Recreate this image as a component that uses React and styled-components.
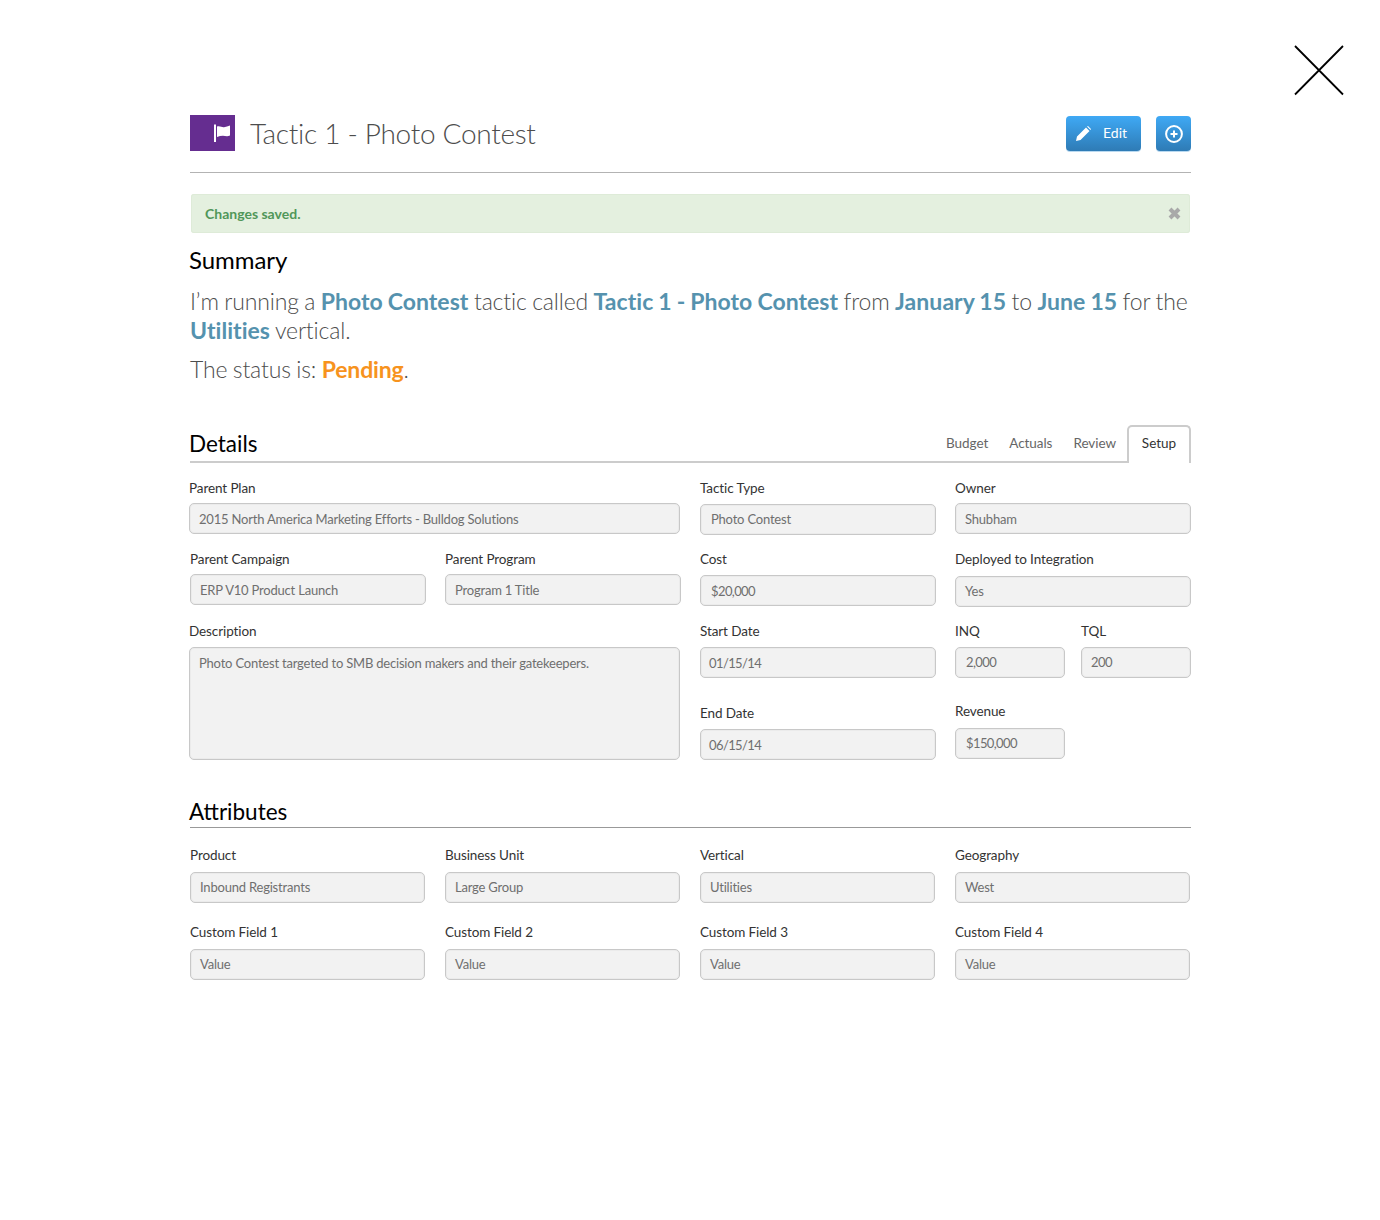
import React from "react";
import styled, { createGlobalStyle } from "styled-components";

const GlobalStyle = createGlobalStyle`
  html, body {
    margin: 0;
    padding: 0;
    background: #fff;
  }
  body {
    font-family: "Lato", "Liberation Sans", sans-serif;
    color: #4d4d4d;
  }
`;

const TABS = ["Budget", "Actuals", "Review"];

const ATTRIBUTES = [
  ["Product", "Inbound Registrants"],
  ["Business Unit", "Large Group"],
  ["Vertical", "Utilities"],
  ["Geography", "West"],
  ["Custom Field 1", "Value"],
  ["Custom Field 2", "Value"],
  ["Custom Field 3", "Value"],
  ["Custom Field 4", "Value"],
];

const Field = ({ label, value, gap, shift, pad, numeric, lift }) => (
  <FieldBox $shift={shift}>
    <Label $gap={gap}>{label}</Label>
    <Input $pad={pad} $numeric={numeric} $lift={lift}>{value}</Input>
  </FieldBox>
);

export default function App() {
  return (
    <Page>
      <GlobalStyle />
      <CloseButton aria-label="Close">
        <svg width="50" height="51" viewBox="0 0 50 51">
          <path d="M1 1 L49 49.5 M49 1 L1 49.5" stroke="#000" strokeWidth="1.8" fill="none" />
        </svg>
      </CloseButton>

      <Header>
        <TitleGroup>
          <IconTile>
            <svg width="17" height="18" viewBox="0 0 17 18">
              <rect x="0" y="0.5" width="2" height="17.5" fill="#fff" />
              <path d="M3 2.5 C6 1.5 8 3.6 10 3.2 C12 2.8 14 2 16 1.5 L16 11.5 C13 13 11 11.7 9 11.7 C7 11.7 5 12.2 3 13 Z" fill="#fff" />
            </svg>
          </IconTile>
          <Title>Tactic 1 - Photo Contest</Title>
        </TitleGroup>
        <Actions>
          <EditButton>
            <svg width="15" height="15" viewBox="0 0 15 15">
              <path d="M0 15 L1 10.5 L10 1.5 L13.5 5 L4.5 14 Z M11 0.5 L12 0 L15 3 L14.5 4 Z" fill="#fff" />
            </svg>
            <span>Edit</span>
          </EditButton>
          <IconButton aria-label="Add">
            <svg width="18" height="18" viewBox="0 0 18 18">
              <circle cx="9" cy="9" r="7.9" stroke="#fff" strokeWidth="2" fill="none" />
              <path d="M9 5.5 V12.5 M5.5 9 H12.5" stroke="#fff" strokeWidth="2" />
            </svg>
          </IconButton>
        </Actions>
      </Header>

      <Alert>
        Changes saved.
        <svg width="13" height="13" viewBox="0 0 13 13">
          <path d="M2 2 L11 11 M11 2 L2 11" stroke="#a9a9a9" strokeWidth="4" />
        </svg>
      </Alert>

      <SummaryHeading>Summary</SummaryHeading>
      <Sentence>
        I’m running a <Em>Photo Contest</Em> tactic called <Em>Tactic 1 - Photo Contest</Em> from{" "}
        <Em>January 15</Em> to <Em>June 15</Em> for the <Em>Utilities</Em> vertical.
      </Sentence>
      <Status>
        The status is: <Pending>Pending</Pending>.
      </Status>

      <SectionBar>
        <SectionHeading $bottom={2}>Details</SectionHeading>
        <Tabs>
          {TABS.map((t) => (
            <Tab key={t}>{t}</Tab>
          ))}
          <ActiveTab>Setup</ActiveTab>
        </Tabs>
      </SectionBar>

      <DetailsGrid>
        <LeftStack>
          <WideBlock>
            <Field label="Parent Plan" value="2015 North America Marketing Efforts - Bulldog Solutions" />
          </WideBlock>
          <TwoUp>
            <Field label="Parent Campaign" value="ERP V10 Product Launch" />
            <Field label="Parent Program" value="Program 1 Title" />
          </TwoUp>
          <WideBlock $shift={1}>
            <Label $gap={6}>Description</Label>
            <TextArea>Photo Contest targeted to SMB decision makers and their gatekeepers.</TextArea>
          </WideBlock>
        </LeftStack>
        <Column>
          <Field label="Tactic Type" value="Photo Contest" gap={6} pad={10} lift />
          <Field label="Cost" value="$20,000" gap={6} pad={10} numeric />
          <Field label="Start Date" value="01/15/14" gap={6} shift={1} pad={8} numeric />
          <Field label="End Date" value="06/15/14" gap={6} shift={11} pad={8} numeric />
        </Column>
        <Column>
          <Field label="Owner" value="Shubham" />
          <Field label="Deployed to Integration" value="Yes" gap={7} shift={1} lift />
          <SmallRow>
            <Field label="INQ" value="2,000" gap={6} pad={10} numeric lift />
            <Field label="TQL" value="200" gap={6} numeric lift />
          </SmallRow>
          <NarrowField>
            <Field label="Revenue" value="$150,000" gap={7} shift={9} pad={10} numeric lift />
          </NarrowField>
        </Column>
      </DetailsGrid>

      <AttributesBar>
        <SectionHeading>Attributes</SectionHeading>
      </AttributesBar>
      <AttributesGrid>
        {ATTRIBUTES.map(([label, value]) => (
          <Field key={label} label={label} value={value} gap={7} lift />
        ))}
      </AttributesGrid>
    </Page>
  );
}

const Page = styled.div`
  position: relative;
  width: 1001px;
  height: 1220px;
  box-sizing: border-box;
  margin-left: 190px;
  padding-top: 115px;
`;

const CloseButton = styled.div`
  position: absolute;
  top: 45px;
  right: -153px;
  line-height: 0;
`;

const Header = styled.header`
  display: flex;
  justify-content: space-between;
  align-items: flex-start;
  height: 57px;
  border-bottom: 1px solid #b3b3b3;
`;

const TitleGroup = styled.div`
  display: flex;
  align-items: flex-start;
  gap: 15px;
`;

const IconTile = styled.div`
  width: 45px;
  height: 36px;
  padding-left: 24px;
  box-sizing: border-box;
  display: flex;
  align-items: center;
  background: #652d90;
`;

const Title = styled.h1`
  margin: 0;
  font-size: 28px;
  font-weight: 300;
  line-height: 36px;
  letter-spacing: -0.3px;
  color: #4d4d4d;
`;

const Actions = styled.div`
  display: flex;
  gap: 15px;
  padding-top: 1px;
`;

const BlueButton = styled.div`
  height: 35px;
  box-sizing: border-box;
  display: flex;
  align-items: center;
  border-radius: 4px;
  color: #fff;
  background: linear-gradient(#3fa9f5, #2e7bb5);
  box-shadow: 0 1px 0 #b9d9f0;
`;

const EditButton = styled(BlueButton)`
  width: 75px;
  padding-left: 10px;
  gap: 12px;
  font-size: 14px;

  span {
    margin-bottom: 3px;
  }
`;

const IconButton = styled(BlueButton)`
  width: 35px;
  justify-content: center;
`;

const Alert = styled.div`
  display: flex;
  justify-content: space-between;
  align-items: center;
  margin: 21px 0 0 1px;
  height: 39px;
  width: 999px;
  box-sizing: border-box;
  padding: 0 9px 0 14px;
  background: #e4f0df;
  border-radius: 3px;
  box-shadow: inset 0 0 0 1px #deebd8;
  color: #51975a;
  font-size: 14px;
  font-weight: 700;
`;

const Heading = styled.h2`
  margin: 0;
  font-size: 22.5px;
  font-weight: 400;
  line-height: 30px;
  color: #000;
`;

const SummaryHeading = styled(Heading)`
  margin: 12px 0 0 -1px;
  font-size: 24px;
  letter-spacing: -0.05px;
`;

const SectionHeading = styled(Heading)`
  margin: 0 0 ${(p) => p.$bottom || 0}px -1px;
`;

const Sentence = styled.p`
  margin: 12px 0 0;
  font-size: 23px;
  font-weight: 300;
  line-height: 29px;
  letter-spacing: -0.15px;
  word-spacing: -0.65px;
  color: #4d4d4d;
`;

const Status = styled(Sentence)`
  margin-top: 10px;
`;

const Em = styled.strong`
  font-weight: 700;
  letter-spacing: 0.05px;
  color: #5592ae;
`;

const Pending = styled.strong`
  font-weight: 700;
  color: #f7931e;
`;

const SectionBar = styled.div`
  display: flex;
  justify-content: space-between;
  align-items: flex-end;
  margin-top: 40px;
  height: 37px;
  border-bottom: 2px solid #cccccc;
`;

const Tabs = styled.div`
  display: flex;
  align-items: flex-end;
  gap: 21px;
  margin-bottom: -2px;
`;

const Tab = styled.div`
  height: 36px;
  box-sizing: border-box;
  padding-bottom: 4px;
  display: flex;
  align-items: center;
  font-size: 13.5px;
  letter-spacing: -0.05px;
  color: #666666;
`;

const ActiveTab = styled.div`
  width: 64px;
  height: 38px;
  margin-left: -10px;
  padding-bottom: 4px;
  box-sizing: border-box;
  display: flex;
  align-items: center;
  justify-content: center;
  border: 2px solid #cccccc;
  border-bottom: 0;
  border-radius: 5px 5px 0 0;
  font-size: 13.5px;
  color: #333333;
  background: #fff;
`;

const DetailsGrid = styled.div`
  display: grid;
  grid-template-columns: 491px 236px 236px;
  column-gap: 19px;
  margin-top: 15px;
`;

const LeftStack = styled.div`
  display: flex;
  flex-direction: column;
  gap: 15px;
`;

const WideBlock = styled.div`
  margin: ${(p) => p.$shift || 0}px 0 0 -1px;
  width: 491px;
`;

const TwoUp = styled.div`
  display: grid;
  grid-template-columns: 236px 236px;
  column-gap: 19px;
`;

const Column = styled.div`
  display: flex;
  flex-direction: column;
  gap: 14px;
`;

const SmallRow = styled.div`
  display: grid;
  grid-template-columns: 110px 110px;
  column-gap: 16px;
`;

const NarrowField = styled.div`
  width: 110px;
`;

const FieldBox = styled.div`
  margin-top: ${(p) => p.$shift || 0}px;
`;

const Label = styled.div`
  height: 20px;
  line-height: 20px;
  margin-bottom: ${(p) => p.$gap || 5}px;
  font-size: 13.5px;
  letter-spacing: -0.1px;
  color: #333333;
  white-space: nowrap;
`;

const Input = styled.div`
  height: 31px;
  box-sizing: border-box;
  padding: 0 ${(p) => p.$pad || 9}px ${(p) => (p.$lift ? 2 : 0)}px;
  display: flex;
  align-items: center;
  background: #f2f2f2;
  border: 1px solid #c8c8c8;
  box-shadow: inset 0 0 0 1px #ebebeb;
  border-radius: 5px;
  font-size: 13px;
  letter-spacing: ${(p) => (p.$numeric ? "-0.6px" : "-0.2px")};
  color: #6f6f6f;
  white-space: nowrap;
`;

const TextArea = styled(Input)`
  height: 113px;
  align-items: flex-start;
  padding-top: 6px;
  line-height: 18px;
`;

const AttributesBar = styled.div`
  height: 40px;
  box-sizing: border-box;
  margin-top: 28px;
  padding-top: 9px;
  border-bottom: 1px solid #999999;
`;

const AttributesGrid = styled.div`
  display: grid;
  grid-template-columns: repeat(4, 235px);
  column-gap: 20px;
  row-gap: 19px;
  margin-top: 17px;
`;
